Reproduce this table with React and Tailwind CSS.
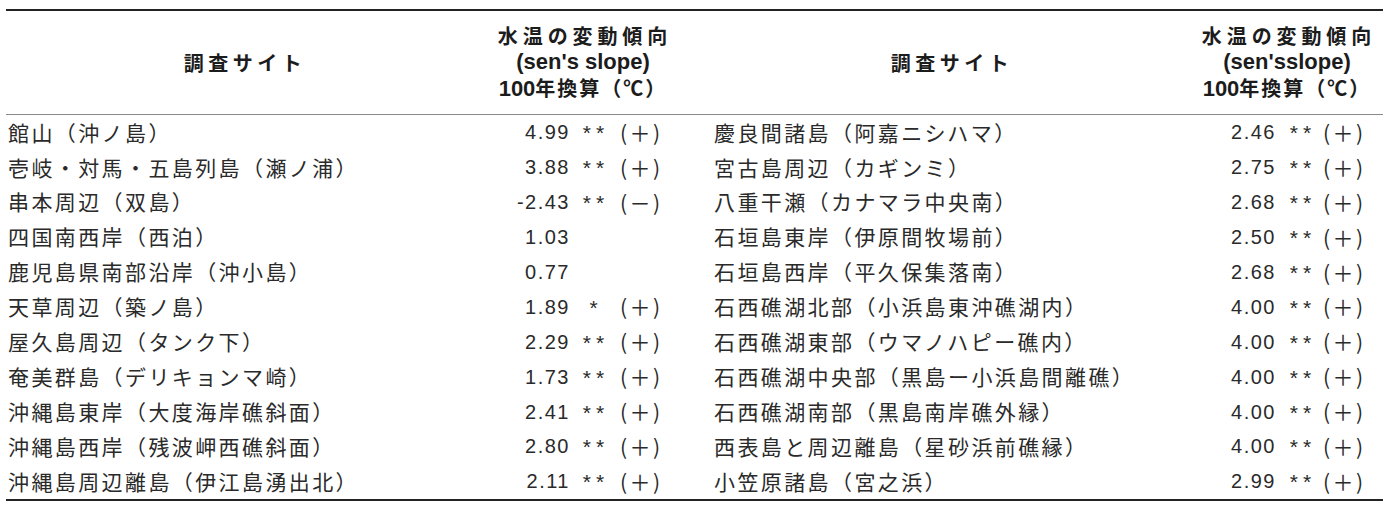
import React from "react";

const left = [
  ["館山（沖ノ島）", "4.99", "**", "+"],
  ["壱岐・対馬・五島列島（瀬ノ浦）", "3.88", "**", "+"],
  ["串本周辺（双島）", "-2.43", "**", "-"],
  ["四国南西岸（西泊）", "1.03", "", ""],
  ["鹿児島県南部沿岸（沖小島）", "0.77", "", ""],
  ["天草周辺（築ノ島）", "1.89", "*", "+"],
  ["屋久島周辺（タンク下）", "2.29", "**", "+"],
  ["奄美群島（デリキョンマ崎）", "1.73", "**", "+"],
  ["沖縄島東岸（大度海岸礁斜面）", "2.41", "**", "+"],
  ["沖縄島西岸（残波岬西礁斜面）", "2.80", "**", "+"],
  ["沖縄島周辺離島（伊江島湧出北）", "2.11", "**", "+"],
];

const right = [
  ["慶良間諸島（阿嘉ニシハマ）", "2.46", "**", "+"],
  ["宮古島周辺（カギンミ）", "2.75", "**", "+"],
  ["八重干瀬（カナマラ中央南）", "2.68", "**", "+"],
  ["石垣島東岸（伊原間牧場前）", "2.50", "**", "+"],
  ["石垣島西岸（平久保集落南）", "2.68", "**", "+"],
  ["石西礁湖北部（小浜島東沖礁湖内）", "4.00", "**", "+"],
  ["石西礁湖東部（ウマノハピー礁内）", "4.00", "**", "+"],
  ["石西礁湖中央部（黒島ー小浜島間離礁）", "4.00", "**", "+"],
  ["石西礁湖南部（黒島南岸礁外縁）", "4.00", "**", "+"],
  ["西表島と周辺離島（星砂浜前礁縁）", "4.00", "**", "+"],
  ["小笠原諸島（宮之浜）", "2.99", "**", "+"],
];

const cjk = { fontFamily: '"Noto Sans CJK JP", "Noto Sans", sans-serif' };
const lat = { fontFamily: '"Liberation Sans", Arial, sans-serif' };

function Header({ slope, siteW, valW }) {
  return (
    <div className="flex items-center h-full">
      <div className={`${siteW} text-center font-bold text-[20px] tracking-[4.5px] text-[#1c1c1c]`}>調査サイト</div>
      <div className={`${valW} flex flex-col items-center font-bold text-[#1c1c1c] leading-[26px] whitespace-nowrap`}>
        <div className="text-[20px] tracking-[4.9px] pl-[4px]">水温の変動傾向</div>
        <div className="text-[22px]" style={lat}>{slope}</div>
        <div className="text-[20px] tracking-[2px]">
          <span className="text-[22px] tracking-[0px]" style={lat}>100</span>年換算（℃）
        </div>
      </div>
    </div>
  );
}

function Sign({ s, ml }) {
  if (!s) return null;
  return (
    <div className={`${ml} flex items-center text-[21px] leading-none`}>
      <span>(</span>
      <span className="w-[26px] text-center">{s === "+" ? "＋" : "－"}</span>
      <span>)</span>
    </div>
  );
}

function Row({ r, siteCls, starsCls, signMl }) {
  return (
    <div className="flex items-center h-[34.9px] text-[#2a2a2a] whitespace-nowrap">
      <div className={`${siteCls} text-[21px] tracking-[2.4px]`}>{r[0]}</div>
      <div className="w-[130px] shrink-0 text-right text-[20px] tracking-[1.5px]" style={lat}>{r[1]}</div>
      <div className={`${starsCls} shrink-0 flex justify-center text-[21px] tracking-[5px] leading-none pt-[1px]`} style={lat}>{r[2]}</div>
      <Sign s={r[3]} ml={signMl} />
    </div>
  );
}

export default function App() {
  return (
    <div className="w-[1389px] h-[508px] bg-white pt-[9px]" style={cjk}>
      <div className="ml-[6px] w-[1377px] border-t-2 border-b-2 border-[#222]">
        <div className="flex h-[104px] border-b border-[#8a8a8a]">
          <div className="w-[694px]">
            <Header slope="(sen's slope)" siteW="w-[478px]" valW="w-[198px]" />
          </div>
          <div className="w-[683px]">
            <Header slope="(sen'sslope)" siteW="w-[504px]" valW="w-[166px]" />
          </div>
        </div>
        <div className="flex">
          <div className="w-[694px] flex flex-col">
            {left.map((r, i) => (
              <Row key={i} r={r} siteCls="w-[434px] pl-[2px]" starsCls="w-[47px] pl-[5px]" signMl="ml-[3px]" />
            ))}
          </div>
          <div className="w-[683px] flex flex-col">
            {right.map((r, i) => (
              <Row key={i} r={r} siteCls="w-[446px] pl-[14px]" starsCls="w-[41px] pl-[13px]" signMl="ml-[6px]" />
            ))}
          </div>
        </div>
      </div>
    </div>
  );
}
